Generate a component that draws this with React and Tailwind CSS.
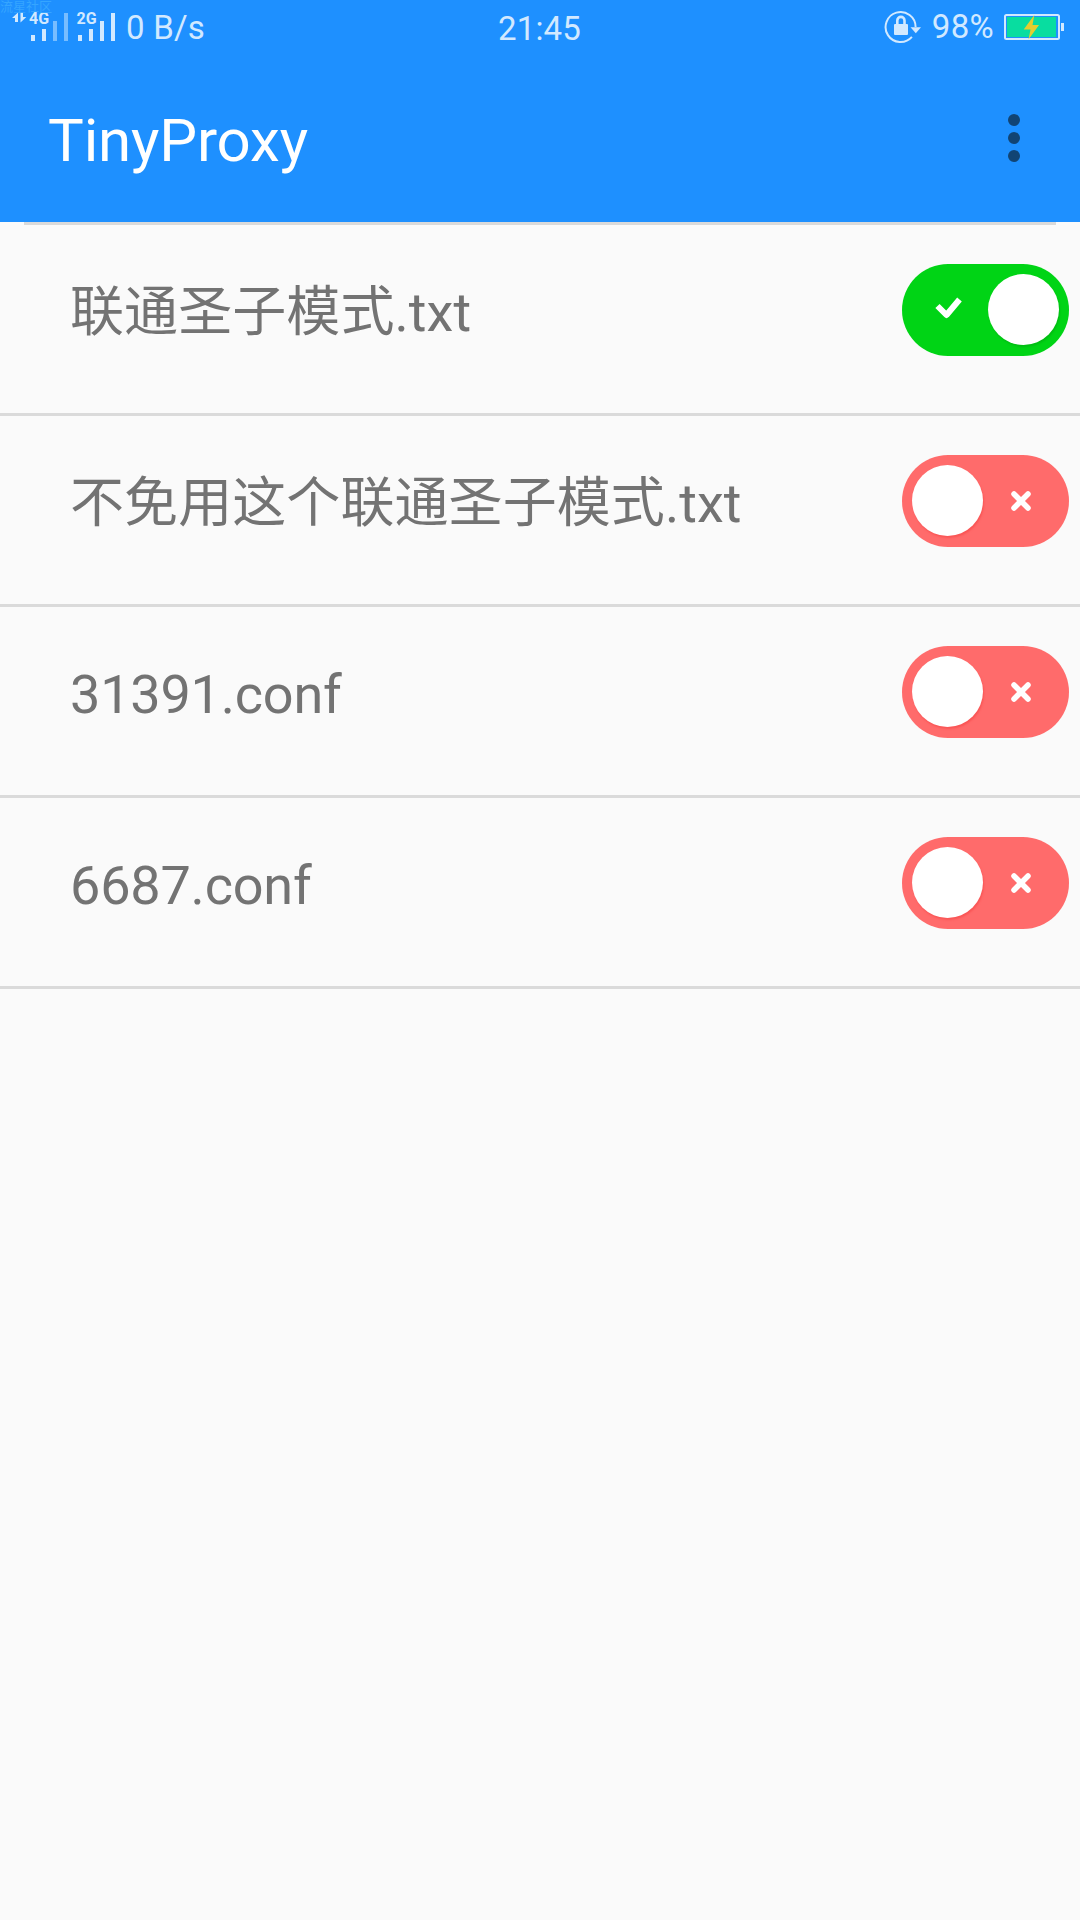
import React, { useState } from "react";
import clsx from "clsx";

const CONFIGS = [
  { name: "联通圣子模式.txt", enabled: true },
  { name: "不免用这个联通圣子模式.txt", enabled: false },
  { name: "31391.conf", enabled: false },
  { name: "6687.conf", enabled: false },
];

// mobile signal for both sims, with the data arrows on the first
function SignalIcons() {
  return (
    <svg width="126" height="54" viewBox="0 0 126 54" className="fill-[#d2e9ff]">
      <path d="M18 12.5V22H15V18H12Z" />
      <path d="M20.500 12.500H23V17H26.300L20.500 22.500Z" />
      <text x="29" y="24" className="text-[16px] font-bold">
        4G
      </text>
      <path d="M31 35h4v6h-4zM42 29h4v12h-4z" />
      <path d="M53 21h4v20h-4zM64 13h4v28h-4z" opacity="0.5" />
      <text x="76.500" y="24" className="text-[16px] font-bold">
        2G
      </text>
      <path d="M78 35h4v6h-4zM89 29h4v12h-4zM100 21h4v20h-4zM111 13h4v28h-4z" />
    </svg>
  );
}

function RotationLock() {
  return (
    <svg width="38" height="54" viewBox="0 0 38 54" fill="none" className="text-[#d2e9ff]">
      <path
        d="M28.900 36.900A15 15 0 1 1 32.600 27"
        stroke="currentColor"
        strokeWidth="2"
      />
      <path d="M27.500 27.300H38L32.800 33.300Z" fill="currentColor" />
      <rect x="11" y="24" width="14" height="11" rx="1" fill="currentColor" />
      <path d="M14.300 25V20.500a3.600 3.600 0 0 1 7.200 0V25" stroke="currentColor" strokeWidth="2.600" />
    </svg>
  );
}

function Battery() {
  return (
    <svg width="62" height="54" viewBox="0 0 62 54" className="text-[#d2e9ff]">
      <rect x="1" y="15" width="54" height="24" rx="1.500" fill="none" stroke="currentColor" strokeWidth="2" />
      <rect x="3" y="17" width="49" height="20" fill="#08dda0" />
      <path d="M57 23h3v8h-3z" fill="currentColor" />
      <path d="M30.300 15L19.700 29.500H26.500L24.500 39.500L35 25H28.500Z" fill="#e4cd2f" />
    </svg>
  );
}

function StatusBar() {
  return (
    <div className="relative grid h-[54px] grid-cols-3 text-[33px] leading-[54px] text-[#d2e9ff]">
      <span className="absolute left-0 top-0 text-[13px] leading-[13px] text-[#35a5ff]">
        流星社区
      </span>
      <div className="flex">
        <SignalIcons />
        <span className="pt-px tracking-[0.2px]">0 B/s</span>
      </div>
      <div className="pr-px pt-0.5 text-center tracking-[0.2px]">21:45</div>
      <div className="flex justify-end pr-[14px]">
        <RotationLock />
        <span className="pl-[11px] pr-[10px] tracking-[0.3px]">98%</span>
        <Battery />
      </div>
    </div>
  );
}

function Toggle({ on, onChange }) {
  return (
    <button
      role="switch"
      aria-checked={on}
      onClick={onChange}
      className={clsx(
        "flex h-[92px] w-[167px] items-center justify-between rounded-full px-[10px]",
        on ? "bg-[#00d415]" : "bg-[#ff6b6b]"
      )}
    >
      {on && (
        <svg width="30" height="26" viewBox="0 0 30 26" fill="none" className="mb-1 ml-[22px]">
          <path d="M3.500 11L12.500 20L25.500 4.500" stroke="white" strokeWidth="6" strokeLinejoin="round" />
        </svg>
      )}
      <span
        className={clsx(
          "mb-px h-[71px] w-[71px] rounded-full bg-white",
          on ? "shadow-[1px_2px_2px_#00bd13]" : "shadow-[1px_2px_2px_#fa5555]"
        )}
      />
      {!on && (
        <svg width="22" height="22" viewBox="0 0 22 22" fill="none" className="mb-px mr-[27px]">
          <path d="M4 4L18 18M18 4L4 18" stroke="white" strokeWidth="5.500" strokeLinecap="round" />
        </svg>
      )}
    </button>
  );
}

export default function App() {
  const [configs, setConfigs] = useState(CONFIGS);

  const toggle = (name) =>
    setConfigs((list) =>
      list.map((c) => (c.name === name ? { ...c, enabled: !c.enabled } : c))
    );

  return (
    <div className="min-h-screen bg-[#fafafa] font-[Roboto,'Noto_Sans_CJK_SC',sans-serif]">
      <header className="h-[222px] bg-[#1e90ff]">
        <StatusBar />
        <div className="flex h-[168px] items-center justify-between pl-12 pr-[60px]">
          <h1 className="pt-[5px] text-[60px] leading-[70px] tracking-[-0.15px] text-white">
            TinyProxy
          </h1>
          <button aria-label="More options" className="flex flex-col gap-1.5">
            <span className="h-3 w-3 rounded-full bg-[#114474]" />
            <span className="h-3 w-3 rounded-full bg-[#114474]" />
            <span className="h-3 w-3 rounded-full bg-[#114474]" />
          </button>
        </div>
      </header>

      <div className="mx-6 h-[3px] bg-[#dadada]" />
      <ul>
        {configs.map(({ name, enabled }) => (
          <li
            key={name}
            className="flex h-[191px] items-start justify-between border-b-[3px] border-[#dadada] pl-[70px] pr-[11px] pt-[39px]"
          >
            <span
              className={clsx(
                "pt-[17px] text-[54px] leading-[64px] text-[#737373]",
                name.endsWith(".conf") ? "tracking-[-0.2px]" : "tracking-[0.08px]"
              )}
            >
              {name}
            </span>
            <Toggle on={enabled} onChange={() => toggle(name)} />
          </li>
        ))}
      </ul>
    </div>
  );
}
